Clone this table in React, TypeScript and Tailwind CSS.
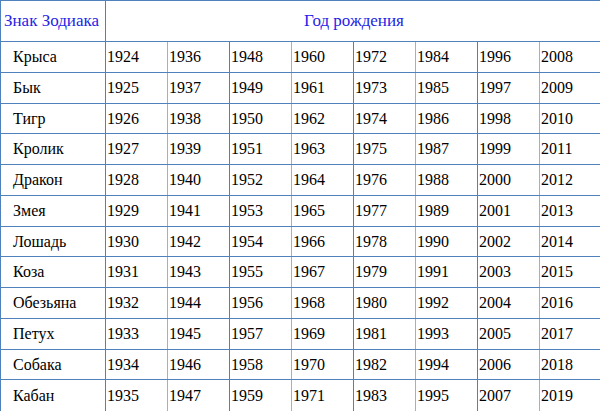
const signs = [
  "Крыса",
  "Бык",
  "Тигр",
  "Кролик",
  "Дракон",
  "Змея",
  "Лошадь",
  "Коза",
  "Обезьяна",
  "Петух",
  "Собака",
  "Кабан",
];

// row heights include the bottom border; mixing 31/30 keeps the lines on the reference grid
const rowHeights = [31, 31, 30, 31, 31, 31, 30, 31, 31, 31, 30, 32];

function YearCell({ year, col }: { year: number; col: number }) {
  return (
    <div
      className={
        "w-[62px] shrink-0 pl-px flex items-center border-r " +
        (col % 2 === 0 ? "border-[#95b3d7]" : "border-[#4f81bd]")
      }
    >
      {year}
    </div>
  );
}

export default function App() {
  return (
    <div className="w-[600px] h-[411px] overflow-hidden bg-white text-[16px] text-black font-['Liberation_Serif','Times_New_Roman',serif]">
      <div className="w-[602px]">
        {/* Header */}
        <div className="flex h-[42px] border-t border-b border-[#4f81bd] text-[#2424e6] text-[17px]">
          <div className="w-[106px] shrink-0 border-l border-r border-[#4f81bd] flex items-center pl-[3px]">
            Знак Зодиака
          </div>
          <div className="flex-1 flex items-center justify-center">Год рождения</div>
        </div>

        {/* Rows */}
        {signs.map((sign, i) => (
          <div
            key={sign}
            className={
              "flex " +
              (i < signs.length - 1 ? "border-b border-[#4f81bd] " : "") +
              (rowHeights[i] === 31 ? "h-[31px]" : rowHeights[i] === 30 ? "h-[30px]" : "h-[32px]")
            }
          >
            <div className="w-[106px] shrink-0 border-l border-r border-[#4f81bd] flex items-center pl-[12px]">
              {sign}
            </div>
            {Array.from({ length: 8 }, (_, j) => (
              <YearCell key={j} year={1924 + i + 12 * j} col={j} />
            ))}
          </div>
        ))}
      </div>
    </div>
  );
}
